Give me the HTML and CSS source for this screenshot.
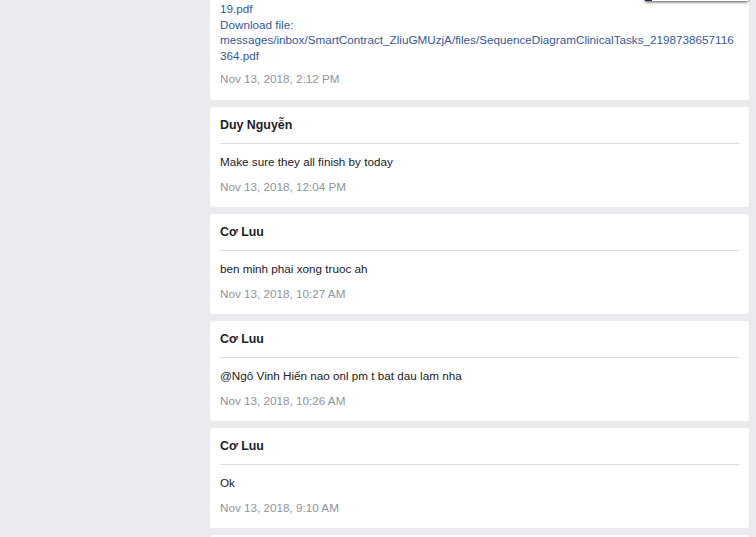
FILE: index.html
```html
<!DOCTYPE html>
<html lang="vi">
<head>
<meta charset="utf-8">
<title>Messages</title>
<link rel="stylesheet" href="styles.css">
</head>
<body>
<div class="popup-edge"><span class="popup-accent"></span></div>
<main class="feed">
  <article class="card card-first">
    <div class="links">
      <a class="link" href="#">messages/inbox/SmartContract_ZliuGMUzjA/files/SequenceDiagramClinicalTasks_21987386571166</a>
      <a class="link" href="#">19.pdf</a>
      <span class="label">Download file:</span>
      <a class="link" href="#">messages/inbox/SmartContract_ZliuGMUzjA/files/SequenceDiagramClinicalTasks_2198738657116</a>
      <a class="link" href="#">364.pdf</a>
    </div>
    <div class="date">Nov 13, 2018, 2:12 PM</div>
  </article>
  <article class="card">
    <header class="name">Duy Nguyễn</header>
    <p class="text">Make sure they all finish by today</p>
    <div class="date">Nov 13, 2018, 12:04 PM</div>
  </article>
  <article class="card">
    <header class="name">Cơ Luu</header>
    <p class="text">ben minh phai xong truoc ah</p>
    <div class="date">Nov 13, 2018, 10:27 AM</div>
  </article>
  <article class="card">
    <header class="name">Cơ Luu</header>
    <p class="text">@Ngô Vinh Hiển nao onl pm t bat dau lam nha</p>
    <div class="date">Nov 13, 2018, 10:26 AM</div>
  </article>
  <article class="card">
    <header class="name">Cơ Luu</header>
    <p class="text">Ok</p>
    <div class="date">Nov 13, 2018, 9:10 AM</div>
  </article>
  <article class="card card-last"></article>
</main>
</body>
</html>
```
FILE: styles.css
```css
html, body {
  margin: 0;
  padding: 0;
}
body {
  background: #e9ebee;
  font-family: "Liberation Sans", Arial, sans-serif;
  color: #1d2129;
  overflow: hidden;
  height: 537px;
  position: relative;
}
.feed {
  margin-left: 210px;
  width: 539px;
  display: flex;
  flex-direction: column;
  gap: 7px;
  margin-top: -44.5px;
}
.card {
  background: #fff;
  border-radius: 3px;
  padding: 10px 10px 12px;
  height: 100px;
  box-sizing: border-box;
  flex: none;
}
.card-first {
  height: auto;
  padding-top: 30px;
  padding-bottom: 13px;
}
.links {
  display: flex;
  flex-direction: column;
  font-size: 11.7px;
  line-height: 15.5px;
}
.link,
.label {
  color: #365899;
  text-decoration: none;
  white-space: nowrap;
}
.name {
  font-size: 12.4px;
  font-weight: bold;
  line-height: 16px;
  padding-bottom: 10px;
  border-bottom: 1px solid #dddfe2;
}
.text {
  margin: 10px 0 0;
  font-size: 11.7px;
  line-height: 16px;
}
.date {
  margin-top: 9px;
  font-size: 11.7px;
  line-height: 16px;
  color: #90949c;
}
.card-first .date {
  margin-top: 8px;
}
.popup-edge {
  position: absolute;
  top: -20px;
  left: 645px;
  width: 103px;
  height: 21px;
  background: #fff;
  box-shadow: 0 1px 3px rgba(0, 0, 0, 0.7);
  z-index: 2;
}
.popup-accent {
  position: absolute;
  left: 0;
  bottom: 0;
  width: 7px;
  height: 3px;
  background: #1e2d5c;
}
```
